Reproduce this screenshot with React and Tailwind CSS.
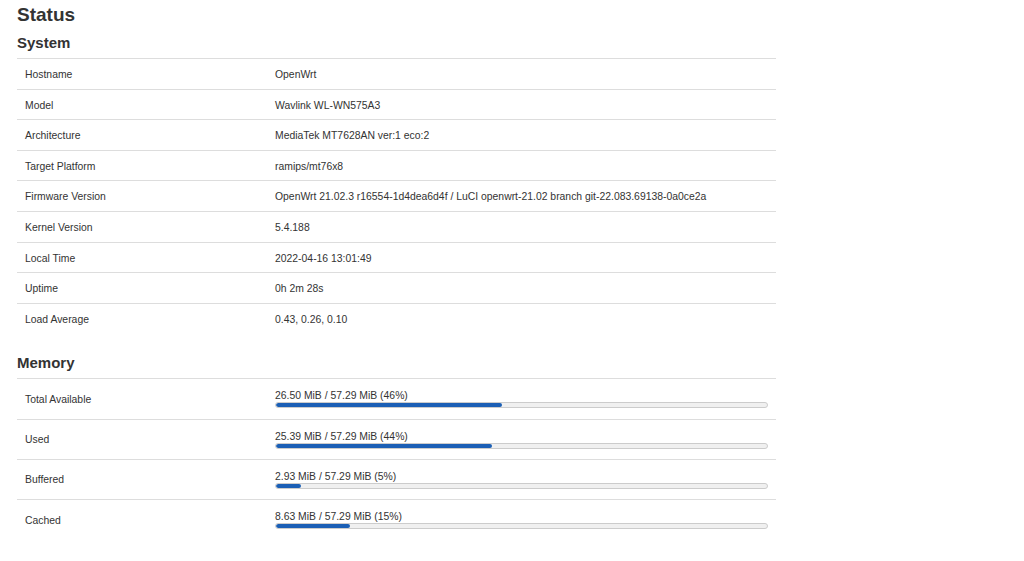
import React from "react";

const system = [
    ["Hostname", "OpenWrt"],
    ["Model", "Wavlink WL-WN575A3"],
    ["Architecture", "MediaTek MT7628AN ver:1 eco:2"],
    ["Target Platform", "ramips/mt76x8"],
    ["Firmware Version", "OpenWrt 21.02.3 r16554-1d4dea6d4f / LuCI openwrt-21.02 branch git-22.083.69138-0a0ce2a"],
    ["Kernel Version", "5.4.188"],
    ["Local Time", "2022-04-16 13:01:49"],
    ["Uptime", "0h 2m 28s"],
    ["Load Average", "0.43, 0.26, 0.10"],
];

const memory = [
    ["Total Available", "26.50 MiB / 57.29 MiB (46%)", 46],
    ["Used", "25.39 MiB / 57.29 MiB (44%)", 44],
    ["Buffered", "2.93 MiB / 57.29 MiB (5%)", 5],
    ["Cached", "8.63 MiB / 57.29 MiB (15%)", 15],
];

const App = () => {
    return (
        <div className="min-h-[561px] bg-white px-[17px] pt-[3px] text-[#333] font-['Liberation_Sans',Arial,sans-serif]">
            <h1 className="text-[19px] font-bold leading-[23px]">Status</h1>

            <h2 className="text-[15px] font-bold leading-[18px] mt-[8px] mb-[6px]">System</h2>
            <div className="w-[759px]">
                {system.map(([label, value]) => (
                    <div key={label} className="flex items-center h-[30.6px] pt-[2px] border-t border-[#ddd] text-[10.4px]">
                        <div className="w-[258px] pl-[8px]">{label}</div>
                        <div className="flex-1">{value}</div>
                    </div>
                ))}
            </div>

            <h2 className="text-[15px] font-bold leading-[18px] mt-[21px] mb-[6px]">Memory</h2>
            <div className="w-[759px]">
                {memory.map(([label, value, pct]) => (
                    <div key={label} className="flex items-center h-[40.3px] border-t border-[#ddd] text-[10.4px]">
                        <div className="w-[258px] pl-[8px] pt-[1px]">{label}</div>
                        <div className="flex-1 pr-[8px] pt-[1px]">
                            <div className="leading-[12px]">{value}</div>
                            <div className="h-[6px] rounded-[3px] border border-[#ccc] bg-[#f0f0f0] overflow-hidden">
                                <div className="h-full bg-[#1b5fb5] rounded-[3px]" style={{ width: `${pct}%` }} />
                            </div>
                        </div>
                    </div>
                ))}
            </div>
        </div>
    );
};

export default App;
